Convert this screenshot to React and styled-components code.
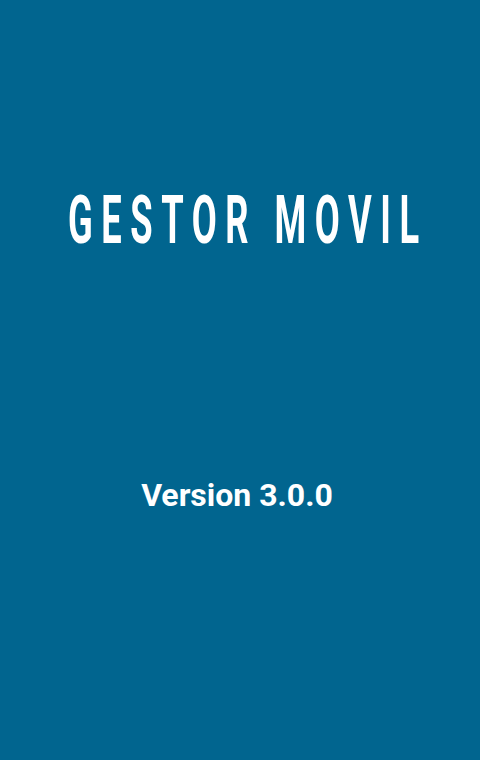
import React from "react"
import styled, { createGlobalStyle } from "styled-components"

const GlobalStyle = createGlobalStyle`
  html, body {
    margin: 0;
    padding: 0;
    background: #01658f;
  }
`

const App = () => {
  return (
    <>
      <GlobalStyle />
      <Splash>
        <TitleBox>
          <Title>GESTOR MOVIL</Title>
        </TitleBox>
        <VersionText>Version 3.0.0</VersionText>
      </Splash>
    </>
  )
}

export default App

const Splash = styled.div`
  width: 480px;
  height: 760px;
  background: #01658f;
  display: flex;
  flex-direction: column;
  align-items: center;
  box-sizing: border-box;
  padding-top: 186px;
`

const TitleBox = styled.div`
  width: 480px;
  display: flex;
  justify-content: center;
  height: 70px;
  align-items: center;
`

const Title = styled.h1`
  margin: 0;
  padding-left: 15.5px;
  font-family: Roboto, "Liberation Sans", sans-serif;
  font-weight: 700;
  font-size: 66px;
  line-height: 1;
  letter-spacing: 15.5px;
  color: #ffffff;
  white-space: nowrap;
  transform: translateX(4px) scaleX(0.55);
`

const VersionText = styled.div`
  margin-top: 223px;
  padding-right: 6px;
  font-family: Roboto, "Liberation Sans", sans-serif;
  font-weight: 700;
  font-size: 32px;
  line-height: 1;
  color: #ffffff;
`
